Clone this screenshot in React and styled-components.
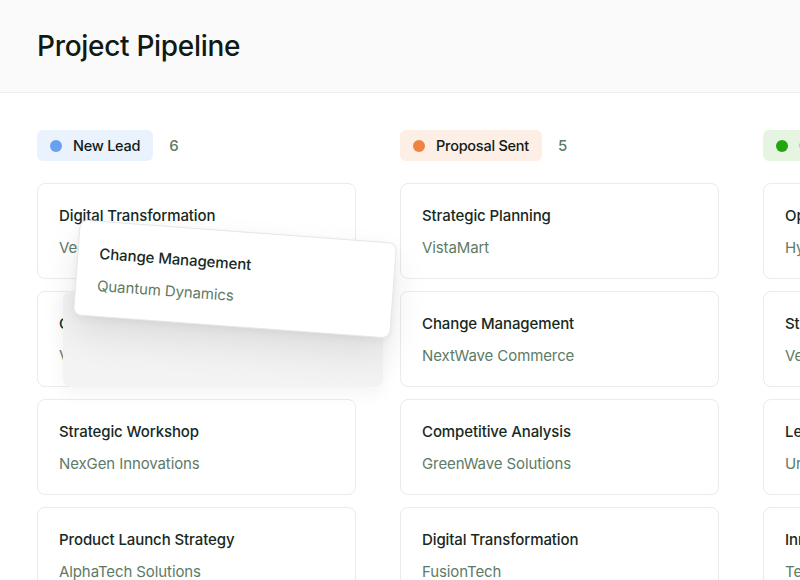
import styled, { createGlobalStyle } from "styled-components";

const GlobalStyle = createGlobalStyle`
  html, body {
    margin: 0;
    padding: 0;
    background: #ffffff;
    overflow: hidden;
  }
  body {
    font-family: Inter, "Noto Sans", "Liberation Sans", sans-serif;
    color: #17291f;
  }
`;

// ------------------------ data ------------------------
const columns = [
  {
    name: "New Lead",
    count: 6,
    tint: "#eaf2fd",
    dot: "#68a1f1",
    cards: [
      { title: "Digital Transformation", client: "VectorEdge" },
      { title: "Customer Journey Mapping", client: "VistaMart", dragging: true },
      { title: "Strategic Workshop", client: "NexGen Innovations" },
      { title: "Product Launch Strategy", client: "AlphaTech Solutions" },
    ],
  },
  {
    name: "Proposal Sent",
    count: 5,
    tint: "#fdeee6",
    dot: "#ef8341",
    cards: [
      { title: "Strategic Planning", client: "VistaMart" },
      { title: "Change Management", client: "NextWave Commerce" },
      { title: "Competitive Analysis", client: "GreenWave Solutions" },
      { title: "Digital Transformation", client: "FusionTech" },
    ],
  },
  {
    name: "Contract Signed",
    count: 4,
    tint: "#e5f5e1",
    dot: "#22a50e",
    cards: [
      { title: "Operational Review", client: "HyperScale" },
      { title: "Strategy Roadmap", client: "VertexOne" },
      { title: "Leadership Coaching", client: "UrbanNest" },
      { title: "Innovation Sprint", client: "TechNova" },
    ],
  },
];

// ------------------------ styling ------------------------
const Page = styled.div`
  width: 800px;
  height: 580px;
  overflow: hidden;
`;

const Header = styled.header`
  height: 93px;
  box-sizing: border-box;
  display: flex;
  align-items: center;
  padding: 0 37px;
  background: #fafafa;
  border-bottom: 1px solid #ededed;
`;

const Title = styled.h1`
  margin: 0;
  font-size: 28px;
  font-weight: 500;
  letter-spacing: -0.3px;
  color: #0f1a14;
`;

const Board = styled.main`
  display: flex;
  gap: 44.5px;
  padding: 37px 37px 0;
`;

const Column = styled.section`
  flex: 0 0 318.5px;
  display: flex;
  flex-direction: column;
`;

const ColumnHead = styled.div`
  display: flex;
  align-items: center;
  gap: 16px;
  margin-bottom: 22px;
`;

const Pill = styled.div`
  display: flex;
  align-items: center;
  gap: 11px;
  height: 31px;
  padding: 0 13px;
  border-radius: 6px;
  background: ${(p) => p.$tint};
  font-size: 14.5px;
  font-weight: 500;
  letter-spacing: -0.25px;
  color: #111a15;
  white-space: nowrap;
`;

const Dot = styled.span`
  width: 12px;
  height: 12px;
  border-radius: 50%;
  background: ${(p) => p.$color};
`;

const Count = styled.span`
  font-size: 15px;
  font-weight: 500;
  color: #5f7a66;
`;

const Stack = styled.div`
  display: flex;
  flex-direction: column;
  gap: 12px;
`;

const Card = styled.div`
  box-sizing: border-box;
  height: 96px;
  padding: 22px 21px;
  background: #ffffff;
  border: 1px solid #ebebeb;
  border-radius: 8px;
  display: flex;
  flex-direction: column;
  gap: 12px;
  white-space: nowrap;
  overflow: hidden;
`;

const CardTitle = styled.div`
  font-size: 15px;
  line-height: 20px;
  font-weight: 500;
  letter-spacing: -0.1px;
  color: #17291f;
`;

const CardClient = styled.div`
  font-size: 15px;
  line-height: 20px;
  letter-spacing: -0.1px;
  color: #5d7b66;
`;

// the slot that holds the card being dragged
const Slot = styled.div`
  position: relative;
  z-index: 2;
`;

const Ghost = styled.div`
  position: absolute;
  top: 0;
  bottom: 0;
  left: 26px;
  right: -27px;
  border-radius: 8px;
  background: #f2f3f2;
  box-shadow: 0 6px 18px rgba(0, 0, 0, 0.05);
`;

const DragCard = styled(Card)`
  position: absolute;
  left: 39px;
  top: -60px;
  width: 318px;
  border-color: #e6e6e6;
  transform: rotate(4.2deg);
  box-shadow: 0 18px 36px rgba(0, 0, 0, 0.09), 0 3px 8px rgba(0, 0, 0, 0.05);
`;

const TaskCard = ({ card }) => (
  <Card>
    <CardTitle>{card.title}</CardTitle>
    <CardClient>{card.client}</CardClient>
  </Card>
);

const App = () => {
  return (
    <Page>
      <GlobalStyle />
      <Header>
        <Title>Project Pipeline</Title>
      </Header>
      <Board>
        {columns.map((col) => (
          <Column key={col.name}>
            <ColumnHead>
              <Pill $tint={col.tint}>
                <Dot $color={col.dot} />
                {col.name}
              </Pill>
              <Count>{col.count}</Count>
            </ColumnHead>
            <Stack>
              {col.cards.map((card, i) =>
                card.dragging ? (
                  <Slot key={i}>
                    <TaskCard card={card} />
                    {/* drop placeholder + the card lifted by the pointer */}
                    <Ghost />
                    <DragCard>
                      <CardTitle>Change Management</CardTitle>
                      <CardClient>Quantum Dynamics</CardClient>
                    </DragCard>
                  </Slot>
                ) : (
                  <TaskCard key={i} card={card} />
                )
              )}
            </Stack>
          </Column>
        ))}
      </Board>
    </Page>
  );
};

export default App;
